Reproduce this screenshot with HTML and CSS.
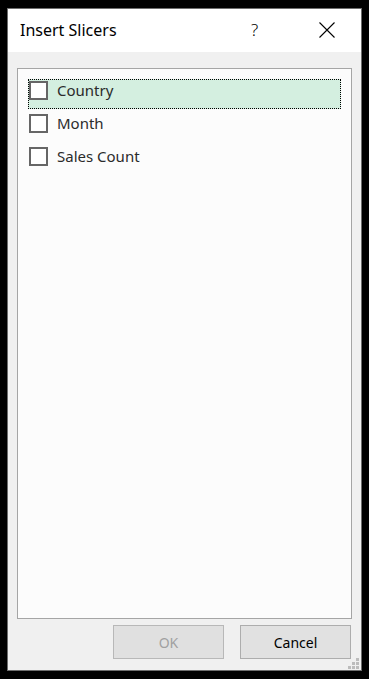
FILE: index.html
```html
<!DOCTYPE html>
<html>
<head>
<meta charset="utf-8">
<link rel="stylesheet" href="styles.css">
</head>
<body>
<div class="dialog">
  <div class="titlebar">
    <span class="title">Insert Slicers</span>
    <span class="help">?</span>
    <span class="close">
      <svg width="16" height="16" viewBox="0 0 16 16"><path d="M0.5 0.5 L15.5 15.5 M15.5 0.5 L0.5 15.5" stroke="#000" stroke-width="1.1" fill="none"/></svg>
    </span>
  </div>
  <div class="body">
    <div class="listbox">
      <div class="item focused"><span class="check"></span><span class="label">Country</span></div>
      <div class="item"><span class="check"></span><span class="label">Month</span></div>
      <div class="item"><span class="check"></span><span class="label">Sales Count</span></div>
    </div>
    <div class="buttons">
      <button class="btn disabled">OK</button>
      <button class="btn">Cancel</button>
    </div>
    <div class="grip">
      <span class="dot d1"></span>
      <span class="dot d2"></span><span class="dot d3"></span>
      <span class="dot d4"></span><span class="dot d5"></span><span class="dot d6"></span>
    </div>
  </div>
</div>
</body>
</html>
```
FILE: styles.css
```css
html, body {
  margin: 0;
  padding: 0;
  background: #000;
  width: 369px;
  height: 679px;
  overflow: hidden;
}
.dialog {
  margin: 8px 0 0 7px;
  width: 353px;
  height: 661px;
  border: 1px solid #6d6d6d;
  background: #f0f0f0;
  display: flex;
  flex-direction: column;
  font-family: "Noto Sans", "Open Sans", sans-serif;
}
.titlebar {
  height: 43px;
  background: #fff;
  display: flex;
  align-items: center;
  flex: none;
}
.title {
  margin-left: 12px;
  font-size: 16px;
  color: #000;
  flex: 1;
  margin-bottom: 2px;
}
.help {
  font-size: 17px;
  font-weight: 300;
  color: #000;
  width: 11px;
  margin-right: 57px;
  margin-bottom: 3px;
}
.close {
  width: 16px;
  height: 16px;
  margin-right: 26px;
  margin-bottom: 2px;
  display: flex;
}
.body {
  flex: 1;
  position: relative;
  display: flex;
  flex-direction: column;
  padding: 16px 9px 10px 9px;
}
.listbox {
  height: 551px;
  box-sizing: border-box;
  border: 1px solid #a5a5a5;
  background: #fcfcfc;
  padding: 10px 10px 0 10px;
  display: flex;
  flex-direction: column;
  gap: 3px;
  flex: none;
}
.item {
  height: 30px;
  width: 313px;
  box-sizing: border-box;
  display: flex;
  align-items: flex-start;
  padding-top: 1px;
  border: 1px solid transparent;
}
.item.focused {
  background: #d4efe0;
  border: 1px dotted #000;
}
.check {
  width: 19px;
  height: 19px;
  box-sizing: border-box;
  border: 2px solid #666;
  background: #fff;
  flex: none;
}
.label {
  margin-left: 9px;
  font-size: 15px;
  line-height: 19px;
  color: #2b2b2b;
}
.buttons {
  display: flex;
  justify-content: flex-end;
  gap: 16px;
  margin-top: 6px;
  margin-right: 1px;
}
.btn {
  width: 111px;
  height: 34px;
  background: #e1e1e1;
  border: 1px solid #adadad;
  font-family: "Noto Sans", "Open Sans", sans-serif;
  font-size: 14px;
  color: #000;
  padding: 0;
  margin: 0;
}
.btn.disabled {
  color: #a0a0a0;
  background: #e0e0e0;
  border-color: #b8b8b8;
}
.grip {
  position: absolute;
  right: 2px;
  bottom: 1px;
  width: 11px;
  height: 11px;
}
.dot {
  position: absolute;
  width: 3px;
  height: 3px;
  background: #bcbcbc;
}
.d1 { left: 8px; top: 0; }
.d2 { left: 4px; top: 4px; }
.d3 { left: 8px; top: 4px; }
.d4 { left: 0; top: 8px; }
.d5 { left: 4px; top: 8px; }
.d6 { left: 8px; top: 8px; }
```
